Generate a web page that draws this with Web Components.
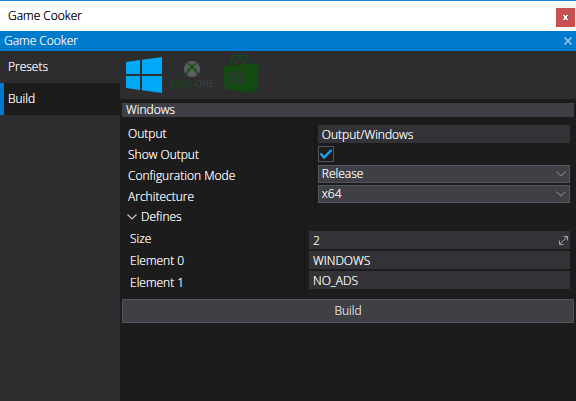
<!DOCTYPE html>
<html lang="en">
<head>
<meta charset="utf-8">
<title>Game Cooker</title>
<style>
html, body { height: 100%; margin: 0; }
body {
  --panel: #2d2d30; --back: #1c1c1c; --accent: #007acc;
  --raised: #3f3f46; --edge: #54545c; --field: #333337; --text: #f1f1f1;
  background: var(--back); color: var(--text);
  font: 300 12px/20px "Open Sans", "Noto Sans", sans-serif;
  text-shadow: 0 0 0 currentColor;
}
</style>
</head>
<body>
<cooker-window></cooker-window>

<script>
function define(name, html) {
  const template = document.createElement('template');
  template.innerHTML = html;
  customElements.define(name, class extends HTMLElement {
    constructor() {
      super();
      this.attachShadow({ mode: 'open' }).append(template.content.cloneNode(true));
    }
  });
}

define('title-bar', `
<style>
:host { display: flex; align-items: center; justify-content: space-between; box-sizing: border-box;
  height: 31px; border-top: 1px solid #1883d7; background: #fff; color: #000; padding: 3px 1px 0 8px; }
span { padding-bottom: 3px; }
button { width: 19px; height: 19px; border: 0; padding: 0; background: #c75050; display: grid; place-items: center; }
</style>
<span><slot></slot></span>
<button aria-label="Close window"><svg width="5" height="5" viewBox="0 0 5 5" fill="#fff" shape-rendering="crispEdges"><path d="M0 0H2V1H3V0H5V1H4V4H5V5H3V4H2V5H0V4H1V1H0Z"/></svg></button>`);

define('tab-header', `
<style>
:host { display: flex; align-items: center; justify-content: space-between; height: 20px;
  background: var(--accent); padding: 0 4px; }
button { border: 0; padding: 0; background: none; width: 8px; height: 8px; display: grid; }
</style>
<span><slot></slot></span>
<button aria-label="Close tab"><svg width="8" height="8" viewBox="0 0 8 8" fill="none" stroke="#8abfe4" stroke-width="1.7"><path d="M.5 .5 7.5 7.5M7.5 .5 .5 7.5"/></svg></button>`);

define('side-tab', `
<style>
:host { display: block; }
button { all: unset; display: block; box-sizing: border-box; width: 100%; height: 32px; line-height: 32px;
  padding-left: 4px; border-left: 4px solid transparent; text-shadow: 0 0 0 currentColor; }
:host([selected]) button { background: var(--back); border-color: var(--accent); }
</style>
<button><slot></slot></button>`);

define('platform-button', `
<style>
:host { display: block; width: 48px; height: 48px; }
button { all: unset; display: block; width: 100%; height: 100%; }
</style>
<button><slot></slot></button>`);

define('group-panel', `
<style>
:host { display: block; }
h2 { margin: 0 0 2px; font: inherit; height: 14px; line-height: 14px; padding-left: 4px; background: var(--raised); }
</style>
<h2><slot name="title"></slot></h2>
<slot></slot>`);

define('property-grid', `
<style>
:host { display: grid; grid-template-columns: 42.5% minmax(0, 1fr); padding: 0 4px 0 6px; }
.labels { display: grid; align-content: start; grid-auto-rows: 21px; align-items: center; padding-top: 4px; border-right: 2px solid #171717; }
.values { display: grid; align-content: start; gap: 2px; padding: 6px 0 0 2px; }
:host([nested]) { padding-left: 8px; grid-template-columns: 40% minmax(0, 1fr); }
:host([nested]) .labels { grid-auto-rows: 22px; padding-top: 2px; }
:host([nested]) .values { padding-top: 5px; padding-left: 3px; }
</style>
<div class="labels"><slot name="label"></slot></div>
<div class="values"><slot></slot></div>`);

define('combo-box', `
<style>
:host { display: grid; align-items: center; }
::slotted(select) { grid-area: 1 / 1; }
svg { grid-area: 1 / 1; justify-self: end; margin-right: 4px; pointer-events: none; }
</style>
<slot></slot>
<svg width="10" height="6" viewBox="0 0 10 6" fill="none" stroke="#77777c" stroke-width="1.2"><path d="M.5 .5 5 5 9.5 .5"/></svg>`);

define('number-box', `
<style>
:host { display: grid; align-items: center; }
::slotted(input) { grid-area: 1 / 1; }
svg { grid-area: 1 / 1; justify-self: end; margin-right: 2px; }
</style>
<slot></slot>
<svg width="9" height="9" viewBox="0 0 9 9" fill="none" stroke="#a0a0a2"><path d="M.5 8.5 8.5 .5M4.5 .5H8.5V4.5M.5 4.5V8.5H4.5"/></svg>`);

define('cooker-window', `
<style>
:host { display: flex; flex-direction: column; min-height: 100%; }
.body { flex: 1; display: grid; grid-template-columns: 120px minmax(0, 1fr); }
nav { background: var(--panel); }
.tools { display: flex; background: var(--panel); }
.tools svg { display: block; text-shadow: none; }
.content { padding: 4px 2px; }
label { line-height: 20px; }
input, select, button { text-shadow: 0 0 0 currentColor; }
input, select { box-sizing: border-box; width: 100%; height: 18px; margin: 0; border: 0; border-radius: 0;
  padding: 0 4px; background: var(--field); color: var(--text); font: inherit; line-height: 16px; appearance: none; outline: 0; }
select { border: 1px solid var(--edge); padding: 0 3px; background: var(--raised); }
input[type=checkbox] { width: 16px; height: 16px; margin: 1px 0; padding: 0; border: 1px solid var(--edge); background: var(--back); grid-area: 1 / 1; }
.tick { display: grid; justify-items: start; align-items: center; }
.tick svg { grid-area: 1 / 1; pointer-events: none; margin-left: 1px; }
.fold { all: unset; display: flex; align-items: center; gap: 4px; height: 19px; padding-left: 5px; text-shadow: 0 0 0 currentColor; }
.build { display: block; width: 100%; height: 24px; margin-top: 5px; padding: 0; font: inherit; color: #dcdcdc;
  background: var(--raised); border: 1px solid var(--edge); }
</style>
<title-bar>Game Cooker</title-bar>
<tab-header>Game Cooker</tab-header>
<div class="body">
  <nav><side-tab>Presets</side-tab><side-tab selected>Build</side-tab></nav>
  <main>
    <div class="tools">
      <platform-button><svg role="img" aria-label="Windows" width="48" height="48" viewBox="0 0 48 48" fill="#00a8f8"><path d="M6 11 20 9V23H6ZM22 8.7 42 6V23H22ZM6 25H20V39L6 37ZM22 25H42V42L22 39.3Z"/></svg></platform-button>
      <platform-button><svg width="48" height="48" viewBox="0 0 48 48">
        <circle cx="24" cy="18" r="8" fill="#5c5e5d"/>
        <path d="M18.3 12.5Q21 11.5 24 14.2 27 11.5 29.7 12.5L28.5 13.2Q26.8 13.6 25.3 15.2 29.6 19 30.3 23L29 24.2Q27.7 20.6 24 17.2 20.3 20.6 19 24.2L17.7 23Q18.4 19 22.7 15.2 21.2 13.6 19.5 13.2Z" fill="#17521a"/>
        <text x="24" y="36" font-size="9" font-weight="400" text-anchor="middle" fill="#134a16">XBOX<tspan fill="#404043" dx="1">ONE</tspan></text></svg></platform-button>
      <platform-button><svg role="img" aria-label="Windows Store" width="48" height="48" viewBox="0 0 48 48">
        <path d="M14.500 14C14 7 18 3 21.500 4.500S26 9 27 13M18.500 13C20 5 28 2.500 31 6Q32.500 8 33 12" fill="none" stroke="#134a16" stroke-width="1.600"/>
        <path d="M7.500 15 42.500 12 41.500 39 37 42 8.500 38Z" fill="#124a12"/>
        <path d="M14 21 19.500 20.500V26H14ZM21 20.300 28 19.500V26H21ZM14 27.500H19.500V32.500L14 32ZM21 27.500H28V33.500L21 32.700Z" fill="#2b3a2d"/></svg></platform-button>
    </div>
    <div class="content">
      <group-panel>
        <span slot="title">Windows</span>
        <property-grid>
          <label slot="label" for="output">Output</label>
          <label slot="label" for="show">Show Output</label>
          <label slot="label" for="mode">Configuration Mode</label>
          <label slot="label" for="arch">Architecture</label>
          <input id="output" value="Output/Windows">
          <div class="tick"><input type="checkbox" id="show" checked><svg width="14" height="12" viewBox="0 0 14 12" fill="none" stroke="#1ba1f2" stroke-width="2.400"><path d="M1.500 5.500 5 9.500 12.500 2"/></svg></div>
          <combo-box><select id="mode"><option>Release</option><option>Debug</option></select></combo-box>
          <combo-box><select id="arch"><option>x64</option><option>x86</option></select></combo-box>
        </property-grid>
        <button class="fold" aria-expanded="true"><svg width="10" height="6" viewBox="0 0 10 6" fill="none" stroke="#c8c8c8" stroke-width="1.200"><path d="M.5 .5 5 5 9.500 .5"/></svg>Defines</button>
        <property-grid nested>
          <label slot="label" for="size">Size</label>
          <label slot="label" for="el0">Element 0</label>
          <label slot="label" for="el1">Element 1</label>
          <number-box><input id="size" inputmode="numeric" value="2"></number-box>
          <input id="el0" value="WINDOWS">
          <input id="el1" value="NO_ADS">
        </property-grid>
      </group-panel>
      <button class="build">Build</button>
    </div>
  </main>
</div>`);
</script>
</body>
</html>
